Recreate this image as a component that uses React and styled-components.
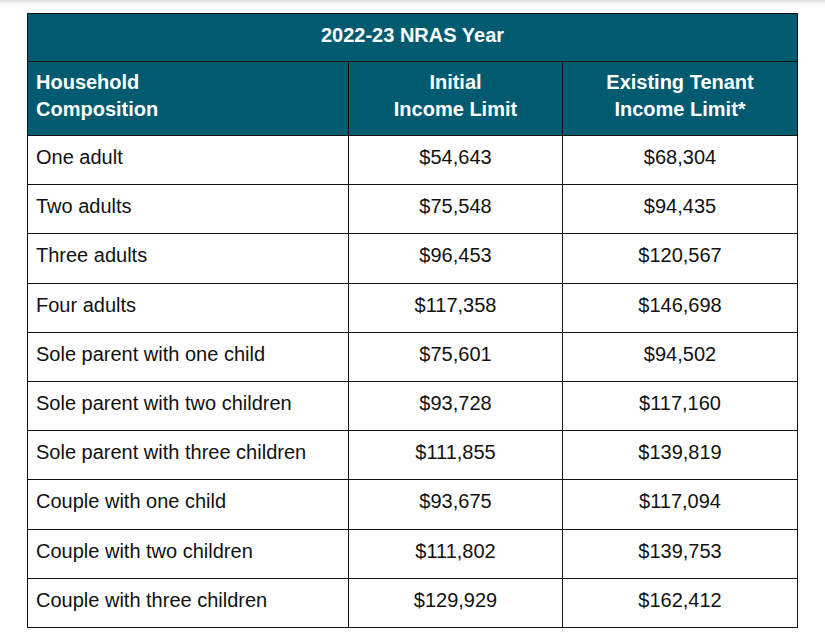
import React from "react";
import styled, { createGlobalStyle } from "styled-components";

const GlobalStyle = createGlobalStyle`
  html, body {
    margin: 0;
    padding: 0;
    background: #ffffff;
  }
  body {
    font-family: "Liberation Sans", Arial, sans-serif;
  }
`;

const Page = styled.div`
  width: 825px;
  height: 635px;
  background: #ffffff;
  overflow: hidden;
`;

const TopShade = styled.div`
  height: 6px;
  background: linear-gradient(to bottom, #dcdcdc 0%, #f3f3f3 50%, #ffffff 100%);
`;

const Wrap = styled.div`
  padding: 7px 0 0 27px;
`;

const Table = styled.table`
  width: 770px;
  border-collapse: collapse;
  table-layout: fixed;
  font-family: "Liberation Sans", Arial, sans-serif;
  font-size: 20px;
  color: #111111;
`;

const TitleCell = styled.th`
  height: 48px;
  box-sizing: border-box;
  padding: 10px 8px 0;
  vertical-align: top;
  text-align: center;
  background: #015b70;
  color: #ffffff;
  font-weight: bold;
  line-height: 23px;
  border: 1px solid #111111;
`;

const HeadCell = styled.th`
  height: 74px;
  box-sizing: border-box;
  padding: 7px 8px 0;
  vertical-align: top;
  text-align: ${(p) => (p.$align === "left" ? "left" : "center")};
  background: #015b70;
  color: #ffffff;
  font-weight: bold;
  line-height: 27px;
  border: 1px solid #111111;
`;

const Cell = styled.td`
  height: 49.2px;
  box-sizing: border-box;
  padding: 10px 8px 0;
  vertical-align: top;
  text-align: ${(p) => (p.$align === "left" ? "left" : "center")};
  line-height: 23px;
  border: 1px solid #111111;
  white-space: nowrap;
`;

const rows = [
  ["One adult", "$54,643", "$68,304"],
  ["Two adults", "$75,548", "$94,435"],
  ["Three adults", "$96,453", "$120,567"],
  ["Four adults", "$117,358", "$146,698"],
  ["Sole parent with one child", "$75,601", "$94,502"],
  ["Sole parent with two children", "$93,728", "$117,160"],
  ["Sole parent with three children", "$111,855", "$139,819"],
  ["Couple with one child", "$93,675", "$117,094"],
  ["Couple with two children", "$111,802", "$139,753"],
  ["Couple with three children", "$129,929", "$162,412"],
];

export default function App() {
  return (
    <Page>
      <GlobalStyle />
      <TopShade />
      <Wrap>
        <Table>
          <colgroup>
            <col style={{ width: "321px" }} />
            <col style={{ width: "214px" }} />
            <col style={{ width: "235px" }} />
          </colgroup>
          <thead>
            <tr>
              <TitleCell colSpan={3}>2022-23 NRAS Year</TitleCell>
            </tr>
            <tr>
              <HeadCell $align="left">
                Household
                <br />
                Composition
              </HeadCell>
              <HeadCell>
                Initial
                <br />
                Income Limit
              </HeadCell>
              <HeadCell>
                Existing Tenant
                <br />
                Income Limit*
              </HeadCell>
            </tr>
          </thead>
          <tbody>
            {rows.map(([label, initial, existing]) => (
              <tr key={label}>
                <Cell $align="left">{label}</Cell>
                <Cell>{initial}</Cell>
                <Cell>{existing}</Cell>
              </tr>
            ))}
          </tbody>
        </Table>
      </Wrap>
    </Page>
  );
}
